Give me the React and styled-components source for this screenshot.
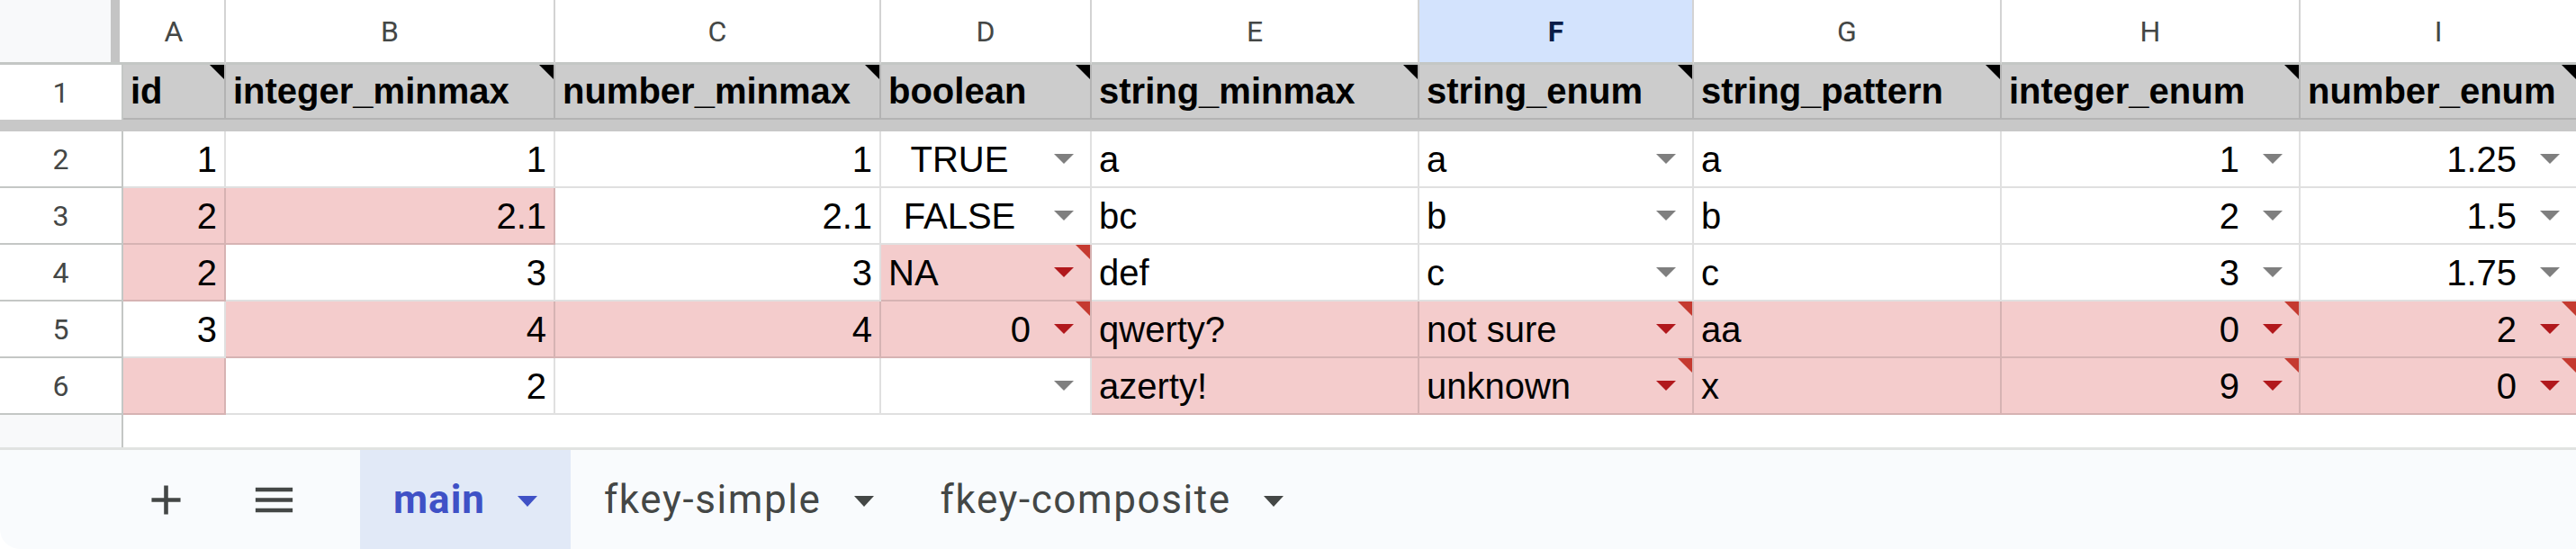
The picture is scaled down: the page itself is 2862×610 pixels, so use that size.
import React from "react"
import styled, { createGlobalStyle, css } from "styled-components"

const GlobalStyle = createGlobalStyle`
html, body{
    margin: 0;
    padding: 0;
    background: #000;
    overflow: hidden;
}
`

const COLS = [
    { letter: "A", name: "id", width: 114 },
    { letter: "B", name: "integer_minmax", width: 366 },
    { letter: "C", name: "number_minmax", width: 362 },
    { letter: "D", name: "boolean", width: 234 },
    { letter: "E", name: "string_minmax", width: 364 },
    { letter: "F", name: "string_enum", width: 305, active: true },
    { letter: "G", name: "string_pattern", width: 342 },
    { letter: "H", name: "integer_enum", width: 332 },
    { letter: "I", name: "number_enum", width: 308 },
]

// which columns hold a dropdown chip
const DROPDOWN = [false, false, false, true, false, true, false, true, true]

// v = value, a = align, bad = red fill, inv = validation error
const ROWS = [
    [
        { v: "1", a: "right" }, { v: "1", a: "right" }, { v: "1", a: "right" },
        { v: "TRUE", a: "center" }, { v: "a" }, { v: "a" }, { v: "a" },
        { v: "1", a: "right" }, { v: "1.25", a: "right" },
    ],
    [
        { v: "2", a: "right", bad: true }, { v: "2.1", a: "right", bad: true }, { v: "2.1", a: "right" },
        { v: "FALSE", a: "center" }, { v: "bc" }, { v: "b" }, { v: "b" },
        { v: "2", a: "right" }, { v: "1.5", a: "right" },
    ],
    [
        { v: "2", a: "right", bad: true }, { v: "3", a: "right" }, { v: "3", a: "right" },
        { v: "NA", bad: true, inv: true }, { v: "def" }, { v: "c" }, { v: "c" },
        { v: "3", a: "right" }, { v: "1.75", a: "right" },
    ],
    [
        { v: "3", a: "right" }, { v: "4", a: "right", bad: true }, { v: "4", a: "right", bad: true },
        { v: "0", a: "right", bad: true, inv: true }, { v: "qwerty?", bad: true },
        { v: "not sure", bad: true, inv: true }, { v: "aa", bad: true },
        { v: "0", a: "right", bad: true, inv: true }, { v: "2", a: "right", bad: true, inv: true },
    ],
    [
        { v: "", bad: true }, { v: "2", a: "right" }, { v: "" },
        { v: "" }, { v: "azerty!", bad: true },
        { v: "unknown", bad: true, inv: true }, { v: "x", bad: true },
        { v: "9", a: "right", bad: true, inv: true }, { v: "0", a: "right", bad: true, inv: true },
    ],
]

const TABS = [
    { name: "main", active: true },
    { name: "fkey-simple" },
    { name: "fkey-composite" },
]

const Page = styled.div`
width: 2862px;
height: 610px;
display: flex;
flex-direction: column;
background: #fff;
overflow: hidden;
`

const Sheet = styled.div`
display: grid;
grid-template-columns: 137px ${COLS.map(c => c.width + "px").join(" ")};
grid-template-rows: 72px 61px 13px repeat(5, 63px);
font-family: "Liberation Sans", Arial, sans-serif;
`

const Corner = styled.div`
background: #f8f9fa;
border-bottom: 3px solid #c4c7c5;
box-shadow: inset -4px 0 0 #fff, inset -14px 0 0 #c4c4c4;
`

const ColHead = styled.div`
display: flex;
align-items: center;
justify-content: center;
border-right: 2px solid #d3d3d3;
border-bottom: 3px solid #c4c7c5;
font-family: Roboto, "Liberation Sans", sans-serif;
font-size: 32px;
color: #444746;
background: ${p => p.$active ? "#d3e3fd" : "#fff"};
${p => p.$active && css`
    color: #0b1d48;
    font-weight: 700;
`}
`

const RowHead = styled.div`
display: flex;
align-items: center;
justify-content: center;
background: #fff;
border-right: 2px solid #c4c7c5;
border-bottom: ${p => p.$last ? "none" : "2px solid #c4c7c5"};
font-family: Roboto, "Liberation Sans", sans-serif;
font-size: 32px;
color: #444746;
`

const HeadCell = styled.div`
position: relative;
display: flex;
align-items: center;
padding: 0 8px;
background: #cccccc;
border-right: 2px solid rgba(0, 0, 0, 0.12);
border-bottom: 2px solid rgba(0, 0, 0, 0.12);
font-size: 40px;
font-weight: 700;
color: #000;
white-space: nowrap;
overflow: hidden;
`

const FreezeBar = styled.div`
grid-column: 1 / -1;
background: #c8c8c8;
`

const Cell = styled.div`
position: relative;
display: flex;
align-items: center;
padding: 0 ${p => p.$dropdown ? "18px" : "8px"} 0 8px;
background: ${p => p.$bad ? "#f4cccc" : "#fff"};
border-right: 2px solid rgba(0, 0, 0, 0.12);
border-bottom: 2px solid rgba(0, 0, 0, 0.12);
font-size: 40px;
color: #000;
white-space: nowrap;
`

const Value = styled.span`
flex: 1;
text-align: ${p => p.$align || "left"};
line-height: 1;
`

const Caret = styled.span`
margin-left: 26px;
width: 0;
height: 0;
border-left: 11px solid transparent;
border-right: 11px solid transparent;
border-top: 11px solid ${p => p.$invalid ? "#b1181c" : "#7f7f7f"};
`

const Flag = styled.span`
position: absolute;
top: 0;
right: 0;
width: 0;
height: 0;
border-left: 16px solid transparent;
border-top: 16px solid ${p => p.$color};
`

const Filler = styled.div`
flex: 1;
display: flex;
`

const FillerHead = styled.div`
width: 135px;
background: #f8f9fa;
border-right: 2px solid #c4c7c5;
`

const TabBar = styled.div`
height: 110px;
flex-shrink: 0;
display: flex;
align-items: stretch;
padding-left: 157px;
background: #f9fbfd;
border-top: 3px solid #e1e3e1;
border-bottom-left-radius: 22px;
font-family: Roboto, "Liberation Sans", sans-serif;
`

const IconBtn = styled.div`
display: flex;
align-items: center;
justify-content: center;
width: 55px;
margin-right: ${p => p.$gap}px;
color: #444746;
`

const Tab = styled.div`
display: flex;
align-items: center;
gap: 36px;
padding: 0 37px;
background: ${p => p.$active ? "#e1e9f7" : "transparent"};
color: ${p => p.$active ? "#3f51c6" : "#444746"};
font-size: 44px;
font-weight: ${p => p.$active ? 700 : 400};
letter-spacing: ${p => p.$active ? "1px" : "1.6px"};
`

const TabCaret = styled.span`
width: 0;
height: 0;
margin-top: 4px;
border-left: 11.5px solid transparent;
border-right: 11.5px solid transparent;
border-top: 12px solid currentColor;
`

const Plus = () => (
    <svg width="55" height="55" viewBox="0 0 24 24" fill="currentColor">
        <path d="M19 13h-6v6h-2v-6H5v-2h6V5h2v6h6v2z" />
    </svg>
)

const Menu = () => (
    <svg width="55" height="55" viewBox="0 0 24 24" fill="currentColor">
        <path d="M3 18h18v-2H3v2zm0-5h18v-2H3v2zm0-7v2h18V6H3z" />
    </svg>
)

const App = () => {
    return (
        <>
            <GlobalStyle />
            <Page>
                <Sheet>
                    <Corner />
                    {COLS.map(c => (
                        <ColHead key={c.letter} $active={c.active}>{c.letter}</ColHead>
                    ))}

                    <RowHead $last>1</RowHead>
                    {COLS.map(c => (
                        <HeadCell key={c.name}>
                            {c.name}
                            <Flag $color="#000" />
                        </HeadCell>
                    ))}

                    <FreezeBar />

                    {ROWS.map((row, r) => (
                        <React.Fragment key={r}>
                            <RowHead>{r + 2}</RowHead>
                            {row.map((cell, i) => (
                                <Cell key={i} $bad={cell.bad} $dropdown={DROPDOWN[i]}>
                                    <Value $align={cell.a}>{cell.v}</Value>
                                    {DROPDOWN[i] && <Caret $invalid={cell.inv} />}
                                    {cell.inv && <Flag $color="#c53a30" />}
                                </Cell>
                            ))}
                        </React.Fragment>
                    ))}
                </Sheet>

                <Filler>
                    <FillerHead />
                </Filler>

                <TabBar>
                    <IconBtn $gap={65}><Plus /></IconBtn>
                    <IconBtn $gap={68}><Menu /></IconBtn>
                    {TABS.map(t => (
                        <Tab key={t.name} $active={t.active}>
                            {t.name}
                            <TabCaret />
                        </Tab>
                    ))}
                </TabBar>
            </Page>
        </>
    )
}

export default App
